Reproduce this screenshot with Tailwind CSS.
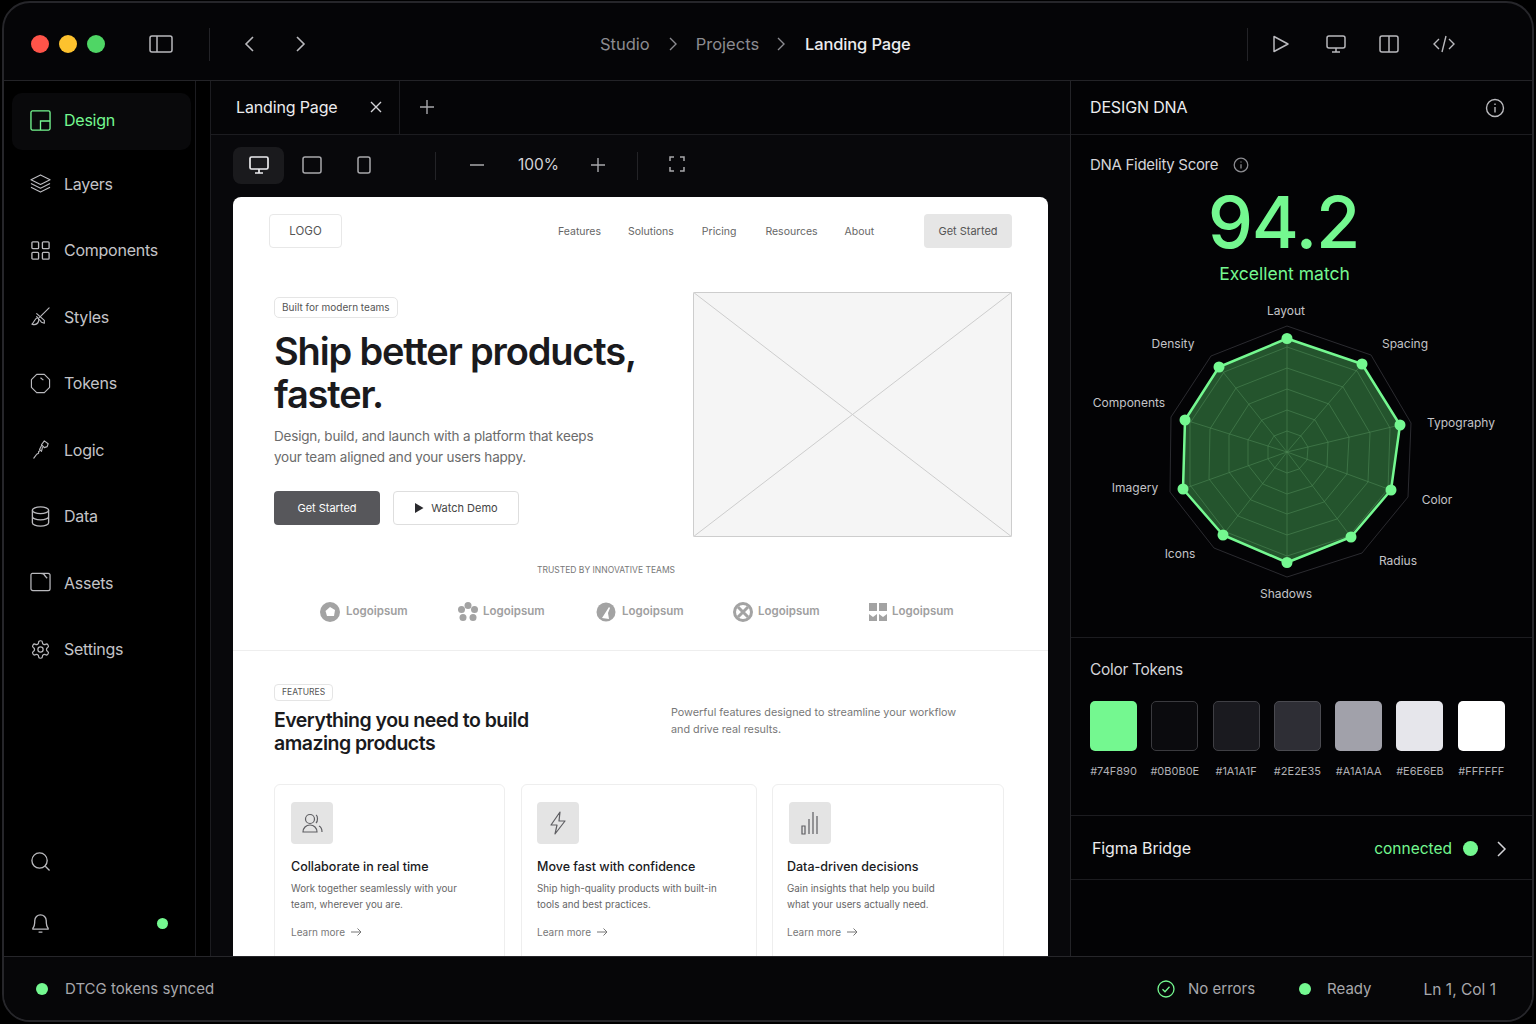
<!DOCTYPE html>
<html lang="en">
<head>
<meta charset="utf-8">
<title>Design DNA</title>
<script src="https://cdn.jsdelivr.net/npm/@tailwindcss/browser@4"></script>
</head>
<body class="bg-black">
<div class="w-[1536px] h-[1024px] pt-px pb-[2px] px-[2px] bg-black font-['Inter',sans-serif] overflow-hidden">
<div class="w-full h-full flex flex-col rounded-[28px] border-2 border-[#26262a] overflow-hidden bg-[#050507]">

<!-- title bar -->
<header class="h-[78px] shrink-0 border-b border-[#232327] flex items-center pt-[6px] text-[16.5px] relative">
  <div class="flex items-center gap-[10px] ml-[27px] -mt-[1px]">
    <span class="w-[18px] h-[18px] rounded-full bg-[#ff5449]"></span>
    <span class="w-[18px] h-[18px] rounded-full bg-[#fdc22e]"></span>
    <span class="w-[18px] h-[18px] rounded-full bg-[#4fd665]"></span>
  </div>
  <svg class="ml-[44px] -mt-[1px]" width="24" height="20" viewBox="0 0 24 20" fill="none" stroke="#b9b9bd" stroke-width="1.5"><rect x="1" y="2" width="22" height="16" rx="2"/><path d="M8 2v16"/></svg>
  <span class="ml-[36px] w-px h-[33px] bg-[#232327]"></span>
  <svg class="ml-[31px] -mt-[1px]" width="16" height="18" viewBox="0 0 16 18" fill="none" stroke="#b9b9bd" stroke-width="1.6"><path d="M12 2 5 9l7 7"/></svg>
  <svg class="ml-[36px] -mt-[1px]" width="16" height="18" viewBox="0 0 16 18" fill="none" stroke="#b9b9bd" stroke-width="1.6"><path d="m4 2 7 7-7 7"/></svg>
  <div class="flex items-center ml-[291px] -mt-[1px] whitespace-nowrap">
    <span class="text-[#8b8b90]">Studio</span>
    <svg class="ml-[17px]" width="12" height="16" viewBox="0 0 12 16" fill="none" stroke="#8b8b90" stroke-width="1.4"><path d="m3 2 6 6-6 6"/></svg>
    <span class="ml-[17px] text-[#8b8b90]">Projects</span>
    <svg class="ml-[16px]" width="12" height="16" viewBox="0 0 12 16" fill="none" stroke="#8b8b90" stroke-width="1.4"><path d="m3 2 6 6-6 6"/></svg>
    <span class="ml-[18px] text-[#ececee] font-medium tracking-[-0.15px]">Landing Page</span>
  </div>
  <span class="ml-auto w-px h-[33px] bg-[#232327]"></span>
  <div class="flex items-center mr-[76px] ml-[24px] gap-[30px] -mt-[1px]">
    <svg width="18" height="18" viewBox="0 0 18 18" fill="none" stroke="#b9b9bd" stroke-width="1.5" stroke-linejoin="round"><path d="M2 1.5v15L16 9z"/></svg>
    <svg class="ml-[6px]" width="20" height="18" viewBox="0 0 20 18" fill="none" stroke="#b9b9bd" stroke-width="1.5"><rect x="1" y="1" width="18" height="12" rx="2"/><path d="M10 13v4M6 17h8"/></svg>
    <svg class="ml-[3px]" width="20" height="18" viewBox="0 0 20 18" fill="none" stroke="#b9b9bd" stroke-width="1.5"><rect x="1" y="1" width="18" height="16" rx="2"/><path d="M10 1v16"/></svg>
    <svg class="ml-[3px]" width="24" height="18" viewBox="0 0 24 18" fill="none" stroke="#b9b9bd" stroke-width="1.4"><path d="M7 4 2 9l5 5M17 4l5 5-5 5M14 1l-4 16"/></svg>
  </div>
</header>

<div class="flex-1 flex min-h-0">
  <!-- sidebar -->
  <aside class="w-[192px] shrink-0 border-r border-[#1c1c20] flex flex-col pt-[12px] text-[16px] tracking-[-0.25px] text-[#c4c4c8] bg-black">
    <a class="ml-[8px] mr-[4px] h-[57px] pb-[2px] pl-[18px] flex items-center gap-[13px] rounded-[10px] bg-[#09090b] text-[#74f890]">
      <svg width="21" height="21" viewBox="0 0 22 22" fill="none" stroke="#74f890" stroke-width="1.4"><rect x="1" y="1" width="20" height="20" rx="1.5"/><path d="M11 21v-9.500h10"/></svg>
      <span class="-mt-[1px]">Design</span>
    </a>
    <a class="mt-[0.5px] h-[66.5px] pl-[26px] flex items-center gap-[13px]">
      <svg width="21" height="21" viewBox="0 0 22 22" fill="none" stroke="#b9b9bd" stroke-width="1.2" stroke-linejoin="round"><path d="m11 2 10 5-10 5L1 7zM1 11l10 5 10-5M1 15l10 5 10-5"/></svg>
      <span>Layers</span>
    </a>
    <a class="h-[66.5px] pl-[26px] flex items-center gap-[13px]">
      <svg width="21" height="21" viewBox="0 0 22 22" fill="none" stroke="#b9b9bd" stroke-width="1.4"><rect x="2" y="2" width="7" height="7" rx="1"/><rect x="13" y="2" width="7" height="7" rx="1"/><rect x="2" y="13" width="7" height="7" rx="1"/><rect x="13" y="13" width="7" height="7" rx="1"/></svg>
      <span>Components</span>
    </a>
    <a class="h-[66.5px] pl-[26px] flex items-center gap-[13px]">
      <svg width="21" height="21" viewBox="0 0 22 22" fill="none" stroke="#b9b9bd" stroke-width="1.2" stroke-linecap="round" stroke-linejoin="round"><path d="M20 2 10 12M7 8l8 7 0 3-3-1-5-6"/><path d="M8 12c-3 1-3 4-6 7 3 1 6 0 7-3 .5-1.500 0-3-1-4z"/></svg>
      <span>Styles</span>
    </a>
    <a class="h-[66.5px] pl-[26px] flex items-center gap-[13px]">
      <svg width="21" height="21" viewBox="0 0 22 22" fill="none" stroke="#b9b9bd" stroke-width="1.2" stroke-linejoin="round"><path d="M7 1.500h8l5.500 5.500v8L15 20.500H7L1.500 15V7z"/><path d="m11 5 3 2.500"/></svg>
      <span>Tokens</span>
    </a>
    <a class="h-[66.5px] pl-[26px] flex items-center gap-[13px]">
      <svg width="21" height="21" viewBox="0 0 22 22" fill="none" stroke="#b9b9bd" stroke-width="1.2" stroke-linecap="round" stroke-linejoin="round"><path d="m15 2 4 3-1 3-3 1-3-3zM12 7l-2 4 1 1-2 1 0 2-2 1-3 4M13 9l-1 4"/></svg>
      <span>Logic</span>
    </a>
    <a class="h-[66.5px] pl-[26px] flex items-center gap-[13px]">
      <svg width="21" height="21" viewBox="0 0 22 22" fill="none" stroke="#b9b9bd" stroke-width="1.4"><ellipse cx="11" cy="4.500" rx="8.500" ry="3.500"/><path d="M2.500 4.500v13c0 2 3.800 3.500 8.500 3.500s8.500-1.500 8.500-3.500v-13M2.500 11c0 2 3.800 3.500 8.500 3.500s8.500-1.500 8.500-3.500"/></svg>
      <span>Data</span>
    </a>
    <a class="h-[66.5px] pl-[26px] flex items-center gap-[13px]">
      <svg width="21" height="21" viewBox="0 0 22 22" fill="none" stroke="#b9b9bd" stroke-width="1.3" stroke-linejoin="round"><path d="M1 3A1.500 1.500 0 0 1 2.500 1.500H19A2 2 0 0 1 21 4v13.500a2 2 0 0 1-2 2H3a2 2 0 0 1-2-2zM11 1.500c2 0 4 .5 5 3l2 2"/></svg>
      <span>Assets</span>
    </a>
    <a class="h-[66.5px] pl-[26px] flex items-center gap-[13px]">
      <svg width="21" height="21" viewBox="0 0 24 24" fill="none" stroke="#b9b9bd" stroke-width="1.4" stroke-linejoin="round"><path d="M12.220 2h-.44a2 2 0 0 0-2 2v.18a2 2 0 0 1-1 1.730l-.43.25a2 2 0 0 1-2 0l-.15-.08a2 2 0 0 0-2.730.73l-.22.38a2 2 0 0 0 .73 2.730l.15.1a2 2 0 0 1 1 1.720v.51a2 2 0 0 1-1 1.740l-.15.09a2 2 0 0 0-.73 2.730l.22.38a2 2 0 0 0 2.730.73l.15-.08a2 2 0 0 1 2 0l.43.25a2 2 0 0 1 1 1.730V20a2 2 0 0 0 2 2h.44a2 2 0 0 0 2-2v-.18a2 2 0 0 1 1-1.730l.43-.25a2 2 0 0 1 2 0l.15.08a2 2 0 0 0 2.730-.73l.22-.39a2 2 0 0 0-.73-2.730l-.15-.08a2 2 0 0 1-1-1.740v-.5a2 2 0 0 1 1-1.740l.15-.09a2 2 0 0 0 .73-2.730l-.22-.38a2 2 0 0 0-2.730-.73l-.15.08a2 2 0 0 1-2 0l-.43-.25a2 2 0 0 1-1-1.730V4a2 2 0 0 0-2-2z"/><circle cx="12" cy="12" r="3"/></svg>
      <span>Settings</span>
    </a>
    <div class="mt-auto pl-[26px] pb-[23px] flex flex-col gap-[40px]">
      <svg width="21" height="21" viewBox="0 0 22 22" fill="none" stroke="#b9b9bd" stroke-width="1.4"><circle cx="10" cy="10" r="8"/><path d="m16 16 4.500 4.500"/></svg>
      <div class="flex items-center">
        <svg width="21" height="22" viewBox="0 0 22 22" fill="none" stroke="#b9b9bd" stroke-width="1.4" stroke-linejoin="round"><path d="M3 16.500c1.500-1.500 2-3 2-8a6 6 0 0 1 12 0c0 5 .5 6.500 2 8v1H3zM9 20.500h4"/></svg>
        <span class="ml-[106px] w-[11px] h-[11px] rounded-full bg-[#74f890]"></span>
      </div>
    </div>
  </aside>
  <div class="w-[15px] shrink-0 border-r border-[#1c1c20] bg-black"></div>

  <!-- center -->
  <section class="w-[860px] shrink-0 border-r border-[#232327] flex flex-col min-h-0 bg-[#08080b]">
    <div class="h-[54px] shrink-0 border-b border-[#1c1c20] flex items-center bg-[#050507]">
      <div class="w-[189px] h-full border-r border-[#1c1c20] pl-[25px] pb-[2px] flex items-center text-[16px] tracking-[-0.15px] text-[#ececee]">
        <span>Landing Page</span>
        <svg class="ml-[32px]" width="14" height="14" viewBox="0 0 14 14" fill="none" stroke="#d4d4d8" stroke-width="1.4"><path d="m2 2 10 10M12 2 2 12"/></svg>
      </div>
      <svg class="ml-[19px] -mt-[2px]" width="16" height="16" viewBox="0 0 16 16" fill="none" stroke="#a8a8ac" stroke-width="1.4"><path d="M8 1v14M1 8h14"/></svg>
    </div>
    <div class="h-[62px] shrink-0 flex items-center pl-[22px]">
      <div class="w-[51px] h-[37px] -mt-[2px] rounded-lg bg-[#1a1a1d] flex items-center justify-center">
        <svg width="20" height="18" viewBox="0 0 20 18" fill="none" stroke="#ececee" stroke-width="1.7"><rect x="1" y="1" width="18" height="12" rx="1.500"/><path d="M10 13v4M6 17h8"/></svg>
      </div>
      <svg class="ml-[18px] -mt-[2px]" width="20" height="18" viewBox="0 0 20 18" fill="none" stroke="#a8a8ac" stroke-width="1.500"><rect x="1" y="1" width="18" height="16" rx="2"/></svg>
      <svg class="ml-[35px] -mt-[2px]" width="14" height="18" viewBox="0 0 14 18" fill="none" stroke="#a8a8ac" stroke-width="1.500"><rect x="1" y="1" width="12" height="16" rx="2"/></svg>
      <span class="ml-[64px] w-px h-[28px] bg-[#232327]"></span>
      <svg class="ml-[34px] -mt-[2px]" width="14" height="14" viewBox="0 0 14 14" fill="none" stroke="#a8a8ac" stroke-width="1.400"><path d="M0 7h14"/></svg>
      <span class="ml-[34px] -mt-[2px] text-[15.500px] text-[#d4d4d8]">100%</span>
      <svg class="ml-[32px] -mt-[2px]" width="14" height="14" viewBox="0 0 14 14" fill="none" stroke="#a8a8ac" stroke-width="1.400"><path d="M7 0v14M0 7h14"/></svg>
      <span class="ml-[32px] w-px h-[28px] bg-[#232327]"></span>
      <svg class="ml-[31px] -mt-[4px]" width="16" height="16" viewBox="0 0 16 16" fill="none" stroke="#a8a8ac" stroke-width="1.500"><path d="M1 5V1h4M11 1h4v4M15 11v4h-4M5 15H1v-4"/></svg>
    </div>

    <!-- canvas -->
    <div class="flex-1 min-h-0 pl-[22px] overflow-hidden">
      <div class="w-[815px] h-[800px] bg-white rounded-t-[8px] text-[#1a1a1d] overflow-hidden">
        <!-- nav -->
        <div class="pt-[17px] pl-[36px] pr-[36px] flex items-center">
          <div class="w-[73px] h-[34px] pt-[1px] border border-[#e8e8e8] rounded-[4px] flex items-center justify-center text-[11.5px] text-[#555]">LOGO</div>
          <nav class="ml-[216px] pt-[1px] flex gap-[27px] text-[10.5px] text-[#666]">
            <span>Features</span><span>Solutions</span><span class="ml-px">Pricing</span><span class="ml-[2px]">Resources</span><span>About</span>
          </nav>
          <div class="ml-auto w-[88px] h-[34px] rounded-[4px] bg-[#e6e6e6] flex items-center justify-center text-[11px] text-[#555]">Get Started</div>
        </div>
        <!-- hero -->
        <div class="mt-[44px] flex">
          <div class="w-[460px] pl-[41px] pt-[5px]">
            <div class="w-fit h-[21px] px-[7px] border border-[#e5e5e5] rounded-[5px] flex items-center text-[10px] text-[#555]">Built for modern teams</div>
            <h1 class="mt-[12px] text-[38px] leading-[43px] font-semibold tracking-[-1.15px] whitespace-nowrap">Ship better products,<br>faster.</h1>
            <p class="mt-[10px] text-[13.500px] leading-[21px] tracking-[-0.2px] text-[#6b6b6b] whitespace-nowrap">Design, build, and launch with a platform that keeps<br>your team aligned and your users happy.</p>
            <div class="mt-[23px] flex gap-[13px]">
              <div class="w-[106px] h-[34px] pt-[1px] rounded-[4px] bg-[#57575b] text-white text-[11px] flex items-center justify-center">Get Started</div>
              <div class="w-[126px] h-[34px] rounded-[4px] border border-[#dedede] text-[#444] text-[11px] flex items-center justify-center gap-[7px]">
                <svg width="10" height="10" viewBox="0 0 10 10" fill="#2a2a2e"><path d="M1 0v10l8.500-5z"/></svg>
                <span>Watch Demo</span>
              </div>
            </div>
          </div>
          <svg width="319" height="245" viewBox="0 0 319 245" class="bg-[#f5f5f5] rounded-[2px]" fill="none" stroke="#cdcdcd"><rect x=".5" y=".5" width="318" height="244"/><path d="M0 0l319 245M319 0 0 245"/></svg>
        </div>
        <div class="mt-[27px] pl-[304px] h-[12px] text-[8.5px] leading-[12px] text-[#777] uppercase">Trusted by innovative teams</div>
        <!-- logos -->
        <div class="mt-[26px] h-[20px] pl-[87px] flex items-center text-[11.5px] font-semibold text-[#a0a0a0] whitespace-nowrap">
          <span class="w-[138px] flex items-center gap-[6px]"><svg width="20" height="20" viewBox="0 0 20 20"><circle cx="10" cy="10" r="10" fill="#a3a3a3"/><path d="m10 5 5 3-1 6H7L5.500 9z" fill="#fff"/></svg>Logoipsum</span>
          <span class="w-[138px] flex items-center gap-[5px]"><svg width="20" height="20" viewBox="0 0 20 20" fill="#a3a3a3"><circle cx="10" cy="3.500" r="3.500"/><circle cx="16.500" cy="7.500" r="3.500"/><circle cx="15" cy="15.500" r="3.500"/><circle cx="5" cy="15.500" r="3.500"/><circle cx="3.500" cy="7.500" r="3.500"/></svg>Logoipsum</span>
          <span class="w-[137px] flex items-center gap-[6px]"><svg width="20" height="20" viewBox="0 0 20 20"><circle cx="10" cy="10" r="9.500" fill="#a3a3a3"/><path d="m6 16 7-11 1 1-2 5 1 6z" fill="#fff"/></svg>Logoipsum</span>
          <span class="w-[136px] flex items-center gap-[5px]"><svg width="20" height="20" viewBox="0 0 20 20" fill="none" stroke="#a3a3a3"><circle cx="10" cy="10" r="8.500" stroke-width="3"/><path d="m5 5 10 10M15 5 5 15" stroke-width="3"/></svg>Logoipsum</span>
          <span class="flex items-center gap-[5px]"><svg width="18" height="18" viewBox="0 0 18 18" fill="#a3a3a3"><path d="M0 0h8v8H0zM10 0h8v8h-8zM0 11l4 3 4-3v7H0zM10 11l4 3 4-3v7h-8z"/></svg>Logoipsum</span>
        </div>
        <!-- features -->
        <div class="mt-[28px] border-t border-[#eeeeee] pt-[33px] pl-[41px]">
          <div class="w-fit h-[17px] px-[7px] border border-[#e5e5e5] rounded-[4px] flex items-center text-[8.5px] text-[#555] uppercase">Features</div>
          <div class="h-[54px] flex items-start">
            <h2 class="w-[397px] mt-[8px] text-[19.500px] leading-[23px] font-semibold tracking-[-0.52px] whitespace-nowrap">Everything you need to build<br>amazing products</h2>
            <p class="mt-[3px] text-[10.800px] leading-[17px] text-[#777] whitespace-nowrap">Powerful features designed to streamline your workflow<br>and drive real results.</p>
          </div>
          <div class="mt-[29px] flex">
            <div class="w-[231px] h-[200px] border border-[#eeeeee] rounded-[6px] pl-[16px] pt-[17px]">
              <div class="w-[42px] h-[42px] rounded-[4px] bg-[#e4e4e4] flex items-center justify-center">
                <svg width="22" height="22" viewBox="0 0 22 22" fill="none" stroke="#5e5e62" stroke-width="1.200"><circle cx="9" cy="7" r="4.500"/><path d="M2 20c0-4 3-7 7-7s7 3 7 7zM15 3c2 1 2 6 0 8M18 14c2 1 3 3 3 6"/></svg>
              </div>
              <h3 class="mt-[14px] text-[12.500px] leading-[18px] font-medium whitespace-nowrap">Collaborate in real time</h3>
              <p class="mt-[5px] text-[9.800px] leading-[16px] text-[#666] whitespace-nowrap">Work together seamlessly with your<br>team, wherever you are.</p>
              <div class="mt-[12px] h-[14px] flex items-center gap-[6px] text-[10px] text-[#777]">Learn more<svg width="11" height="10" viewBox="0 0 11 10" fill="none" stroke="#777" stroke-width="1"><path d="M0 5h10M6.500 1.500 10 5 6.500 8.500"/></svg></div>
            </div>
            <div class="ml-[16px] w-[236px] h-[200px] border border-[#eeeeee] rounded-[6px] pl-[15px] pt-[17px]">
              <div class="w-[42px] h-[42px] rounded-[4px] bg-[#e4e4e4] flex items-center justify-center">
                <svg width="18" height="24" viewBox="0 0 18 24" fill="none" stroke="#5e5e62" stroke-width="1.200" stroke-linejoin="round"><path d="M11 1 2 14h6l-2 9 10-13h-6z"/></svg>
              </div>
              <h3 class="mt-[14px] text-[12.500px] leading-[18px] font-medium whitespace-nowrap">Move fast with confidence</h3>
              <p class="mt-[5px] text-[9.800px] leading-[16px] text-[#666] whitespace-nowrap">Ship high-quality products with built-in<br>tools and best practices.</p>
              <div class="mt-[12px] h-[14px] flex items-center gap-[6px] text-[10px] text-[#777]">Learn more<svg width="11" height="10" viewBox="0 0 11 10" fill="none" stroke="#777" stroke-width="1"><path d="M0 5h10M6.500 1.500 10 5 6.500 8.500"/></svg></div>
            </div>
            <div class="ml-[15px] w-[232px] h-[200px] border border-[#eeeeee] rounded-[6px] pl-[14px] pt-[17px]">
              <div class="ml-[2px] w-[42px] h-[42px] rounded-[4px] bg-[#e4e4e4] flex items-center justify-center">
                <svg width="20" height="24" viewBox="0 0 20 24" fill="none" stroke="#5e5e62" stroke-width="1.200"><path d="M2 15h3v8H2zM9 8v15M13 1v22h0M17 5v18"/></svg>
              </div>
              <h3 class="mt-[14px] text-[12.500px] leading-[18px] font-medium whitespace-nowrap">Data-driven decisions</h3>
              <p class="mt-[5px] text-[9.800px] leading-[16px] text-[#666] whitespace-nowrap">Gain insights that help you build<br>what your users actually need.</p>
              <div class="mt-[12px] h-[14px] flex items-center gap-[6px] text-[10px] text-[#777]">Learn more<svg width="11" height="10" viewBox="0 0 11 10" fill="none" stroke="#777" stroke-width="1"><path d="M0 5h10M6.500 1.500 10 5 6.500 8.500"/></svg></div>
            </div>
          </div>
        </div>
      </div>
    </div>
  </section>

  <!-- right panel -->
  <aside class="flex-1 min-w-0 flex flex-col bg-[#030305]">
    <div class="h-[54px] shrink-0 border-b border-[#1c1c20] pb-[2px] pl-[19px] pr-[27px] flex items-center justify-between">
      <span class="text-[16px] tracking-[-0.15px] text-[#ececee]">DESIGN DNA</span>
      <svg class="mt-[2px]" width="20" height="20" viewBox="0 0 20 20" fill="none" stroke="#b9b9bd" stroke-width="1.400"><circle cx="10" cy="10" r="8.500"/><path d="M10 9v5.500M10 5.500v1.500"/></svg>
    </div>
    <div class="h-[503px] shrink-0 border-b border-[#1c1c20]">
      <div class="pl-[19px] pt-[20px] h-[40px] flex items-center gap-[15px] text-[15px] tracking-[-0.3px] text-[#d4d4d8]">
        <span>DNA Fidelity Score</span>
        <svg width="16" height="16" viewBox="0 0 20 20" fill="none" stroke="#8b8b90" stroke-width="1.600"><circle cx="10" cy="10" r="8.500"/><path d="M10 9v5.500M10 5.500v1.500"/></svg>
      </div>
      <div class="w-[425px] mt-[12px] text-center text-[72px] leading-[70px] font-medium tracking-[-1.2px] text-[#74f890]">94.2</div>
      <div class="w-[427px] mt-[5px] text-center text-[17.500px] leading-[24px] text-[#74f890]">Excellent match</div>
      <svg class="mt-[10px] block" width="461" height="340" viewBox="1071 296 461 340" font-family="Inter, sans-serif" font-size="12" fill="#c4c4c8" text-anchor="middle">
        <g transform="translate(1287 452)">
          <g fill="none" stroke="#2b2b30" stroke-width="1">
            <polygon points="0,-126 84,-97 124,-29 121,45 75,101 0,125 -73,96 -117,40 -116,-35 -76,-96"/>
          </g>
          <polygon points="0,-113.500 75,-88 113,-27 104,38 64,85 0,110.500 -64,83 -104,37 -102,-32 -68,-85" fill="#24542d" stroke="none"/>
          <g fill="none" stroke="#4d8755" stroke-opacity="0.600" stroke-width="1">
            <polygon points="0,-105 70,-81 103,-24 101,37 62,84 0,104 -61,80 -97,33 -97,-29 -63,-80"/>
            <polygon points="0,-84 56,-65 83,-19 81,30 50,67 0,83 -49,64 -78,27 -77,-23 -51,-64"/>
            <polygon points="0,-63 42,-48 62,-15 60,22 37,50 0,62 -36,48 -58,20 -58,-17 -38,-48"/>
            <polygon points="0,-42 28,-32 41,-10 40,15 25,34 0,42 -24,32 -39,13 -39,-12 -25,-32"/>
            <polygon points="0,-21 14,-16 21,-5 20,8 12,17 0,21 -12,16 -19,7 -19,-6 -13,-16"/>
            <path d="M0 0 0-113.500M0 0 75-88M0 0 113-27M0 0 104 38M0 0 64 85M0 0 0 110.500M0 0-64 83M0 0-104 37M0 0-102-32M0 0-68-85"/>
          </g>
          <polygon points="0,-113.500 75,-88 113,-27 104,38 64,85 0,110.500 -64,83 -104,37 -102,-32 -68,-85" fill="none" stroke="#74f890" stroke-width="2.500" stroke-linejoin="round"/>
          <g fill="#74f890">
            <circle cx="0" cy="-113.500" r="5.500"/><circle cx="75" cy="-88" r="5.500"/><circle cx="113" cy="-27" r="5.500"/><circle cx="104" cy="38" r="5.500"/><circle cx="64" cy="85" r="5.500"/><circle cx="0" cy="110.500" r="5.500"/><circle cx="-64" cy="83" r="5.500"/><circle cx="-104" cy="37" r="5.500"/><circle cx="-102" cy="-32" r="5.500"/><circle cx="-68" cy="-85" r="5.500"/>
          </g>
        </g>
        <text x="1286" y="315">Layout</text>
        <text x="1405" y="348">Spacing</text>
        <text x="1461" y="427">Typography</text>
        <text x="1437" y="504">Color</text>
        <text x="1398" y="565">Radius</text>
        <text x="1286" y="598">Shadows</text>
        <text x="1180" y="558">Icons</text>
        <text x="1135" y="492">Imagery</text>
        <text x="1129" y="407">Components</text>
        <text x="1173" y="348">Density</text>
      </svg>
    </div>
    <div class="h-[178px] shrink-0 border-b border-[#1c1c20] pl-[19px] pt-[22px]">
      <div class="text-[15.500px] tracking-[-0.3px] leading-[20px] text-[#d4d4d8]">Color Tokens</div>
      <div class="mt-[21px] flex gap-[14.300px] text-[11px] leading-[14px] text-[#b0b0b4]">
        <div class="w-[47px] flex flex-col items-center whitespace-nowrap"><span class="w-[47px] h-[50px] rounded-[5px] bg-[#74f890]"></span><span class="mt-[13px]">#74F890</span></div>
        <div class="w-[47px] flex flex-col items-center whitespace-nowrap"><span class="w-[47px] h-[50px] rounded-[5px] bg-[#0b0b0e] border border-[#3a3a3e]"></span><span class="mt-[13px]">#0B0B0E</span></div>
        <div class="w-[47px] flex flex-col items-center whitespace-nowrap"><span class="w-[47px] h-[50px] rounded-[5px] bg-[#1a1a1f] border border-[#3f3f44]"></span><span class="mt-[13px]">#1A1A1F</span></div>
        <div class="w-[47px] flex flex-col items-center whitespace-nowrap"><span class="w-[47px] h-[50px] rounded-[5px] bg-[#2e2e35] border border-[#4a4a50]"></span><span class="mt-[13px]">#2E2E35</span></div>
        <div class="w-[47px] flex flex-col items-center whitespace-nowrap"><span class="w-[47px] h-[50px] rounded-[5px] bg-[#a1a1aa]"></span><span class="mt-[13px]">#A1A1AA</span></div>
        <div class="w-[47px] flex flex-col items-center whitespace-nowrap"><span class="w-[47px] h-[50px] rounded-[5px] bg-[#e6e6eb]"></span><span class="mt-[13px]">#E6E6EB</span></div>
        <div class="w-[47px] flex flex-col items-center whitespace-nowrap"><span class="w-[47px] h-[50px] rounded-[5px] bg-white"></span><span class="mt-[13px]">#FFFFFF</span></div>
      </div>
    </div>
    <div class="h-[64px] shrink-0 border-b border-[#1c1c20] pt-[2px] pl-[21px] pr-[25px] flex items-center">
      <span class="-mt-[2px] text-[16px] tracking-[-0.1px] text-[#ececee]">Figma Bridge</span>
      <span class="ml-auto text-[15.500px] text-[#74f890] mr-[-1px]">connected</span>
      <span class="ml-[12px] w-[15px] h-[15px] rounded-full bg-[#74f890]"></span>
      <svg class="ml-[17px]" width="12" height="18" viewBox="0 0 12 18" fill="none" stroke="#d4d4d8" stroke-width="1.500"><path d="m3 2 7 7-7 7"/></svg>
    </div>
    <div class="flex-1"></div>
  </aside>
</div>

<!-- status -->
<footer class="h-[64px] shrink-0 border-t border-[#26262a] flex items-center pl-[32px] pr-[36px] text-[15px] text-[#a8a8ac] bg-[#060608] -mt-px">
  <span class="w-[12px] h-[12px] rounded-full bg-[#74f890]"></span>
  <span class="ml-[17px] mt-[2px]">DTCG tokens synced</span>
  <svg class="ml-auto" width="18" height="18" viewBox="0 0 18 18" fill="none" stroke="#74f890" stroke-width="1.300"><circle cx="9" cy="9" r="8"/><path d="m5.500 9.300 2.500 2.500 4.500-5"/></svg>
  <span class="ml-[13px] mt-[2px]">No errors</span>
  <span class="ml-[44px] w-[12px] h-[12px] rounded-full bg-[#74f890]"></span>
  <span class="ml-[16px] mt-[2px]">Ready</span>
  <span class="ml-[52px] mt-[2px] text-[15.500px]">Ln 1, Col 1</span>
</footer>
</div>
</div>
</body>
</html>
